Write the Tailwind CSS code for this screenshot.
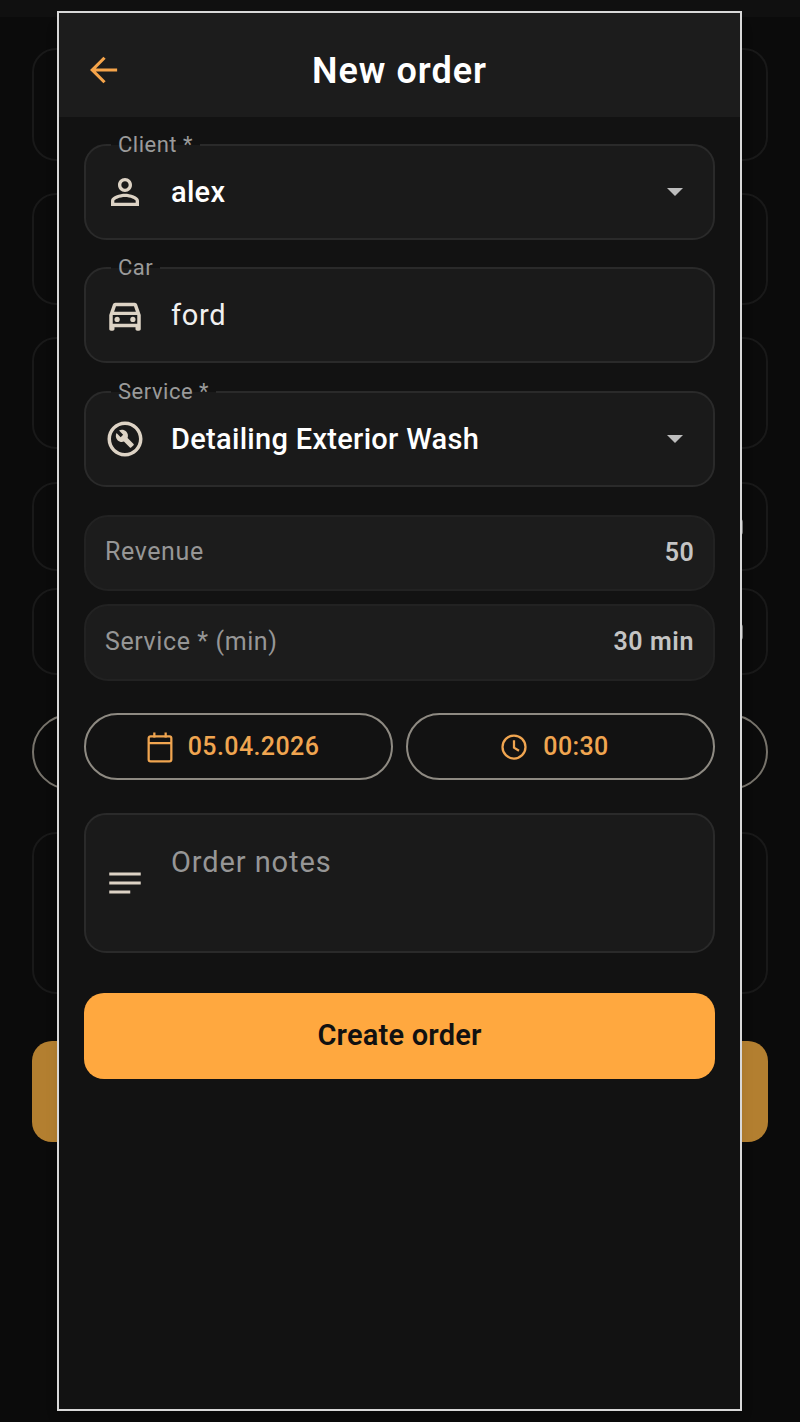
<!DOCTYPE html>
<html lang="en">
<head>
    <meta charset="UTF-8">
    <meta name="viewport" content="width=device-width, initial-scale=1.0">
    <title>New order</title>
    <script src="https://cdn.jsdelivr.net/npm/@tailwindcss/browser@4"></script>
</head>
<body class="relative w-[800px] h-[1422px] overflow-hidden bg-[#0b0b0b] font-['Roboto',sans-serif]">

    <!-- Page behind the dialog -->
    <div class="h-[17px] bg-[#101010]"></div>
    <div class="flex flex-col px-[32px]">
        <div class="mt-[31px] h-[113px] rounded-[24px] border-2 border-[#191919]"></div>
        <div class="mt-[32px] h-[112px] rounded-[24px] border-2 border-[#191919]"></div>
        <div class="mt-[32px] h-[112px] rounded-[24px] border-2 border-[#191919]"></div>
        <div class="mt-[33px] h-[89px] rounded-[24px] border-2 border-[#191919] flex items-center justify-end pr-[23px]">
            <div class="w-[6px] h-[16px] rounded-sm bg-[#777777]"></div>
        </div>
        <div class="mt-[17px] h-[87px] rounded-[24px] border-2 border-[#191919] flex items-center justify-between px-[23px]">
            <div class="w-[3px] h-[6px] bg-[#555555]"></div>
            <div class="w-[6px] h-[16px] rounded-sm bg-[#777777]"></div>
        </div>
        <div class="mt-[39px] h-[76px] rounded-full border-2 border-[#77736b]"></div>
        <div class="mt-[42px] h-[162px] rounded-[24px] border-2 border-[#191919]"></div>
        <div class="mt-[47px] h-[101px] rounded-[20px] bg-[#b37f30]"></div>
    </div>

    <!-- Dialog -->
    <div class="absolute left-[57px] top-[11px] w-[685px] h-[1400px] border-2 border-[#d8d8d8] bg-[#121212] flex flex-col shadow-lg">
        <header class="relative h-[104px] shrink-0 bg-[#1c1c1c] flex items-center justify-center">
            <button class="absolute left-[24px] top-[36px] text-[#f5a44a]">
                <svg class="w-[42px] h-[42px]" viewBox="0 0 24 24" fill="none" stroke="currentColor" stroke-width="1.8">
                    <path d="M19.5 12H5.5M12.3 5l-7 7 7 7"/>
                </svg>
            </button>
            <h1 class="text-[36px] leading-none font-semibold tracking-[1px] text-white mt-[12px]">New order</h1>
        </header>

        <div class="flex flex-col px-[25px] pt-[27px]">
            <!-- Client -->
            <div class="relative h-[96px] rounded-[22px] border-2 border-[#2a2a2a] bg-[#1a1a1a] flex items-center pl-[18px] pr-[30px]">
                <span class="absolute left-[25px] -top-[13px] px-[7px] h-[24px] leading-[24px] text-[22px] tracking-[0.5px] text-[#9a9a9a] bg-[linear-gradient(#121212_50%,#1a1a1a_50%)]">Client *</span>
                <svg class="w-[42px] h-[42px] shrink-0 text-[#ddd3c5]" viewBox="0 0 24 24" fill="currentColor">
                    <path d="M12 5.9c1.16 0 2.1.94 2.1 2.1s-.94 2.1-2.1 2.1S9.9 9.16 9.9 8s.94-2.1 2.1-2.1m0 9c2.97 0 6.1 1.46 6.1 2.1v1.1H5.9V17c0-.64 3.13-2.1 6.1-2.1M12 4C9.79 4 8 5.79 8 8s1.79 4 4 4 4-1.79 4-4-1.79-4-4-4zm0 9c-2.67 0-8 1.34-8 4v3h16v-3c0-2.66-5.33-4-8-4z"/>
                </svg>
                <span class="ml-[25px] flex-1 mt-[2px] text-[29px] font-medium tracking-[0.3px] text-white">alex</span>
                <div class="w-0 h-0 border-x-[8px] border-x-transparent border-t-[8px] border-t-[#bdbdbd]"></div>
            </div>

            <!-- Car -->
            <div class="relative mt-[27px] h-[96px] rounded-[22px] border-2 border-[#2a2a2a] bg-[#1a1a1a] flex items-center pl-[18px] pr-[30px]">
                <span class="absolute left-[25px] -top-[13px] px-[7px] h-[24px] leading-[24px] text-[22px] tracking-[0.5px] text-[#9a9a9a] bg-[linear-gradient(#121212_50%,#1a1a1a_50%)]">Car</span>
                <svg class="w-[42px] h-[42px] shrink-0 text-[#ddd3c5]" viewBox="0 0 24 24" fill="currentColor">
                    <path d="M18.92 6.01C18.72 5.42 18.16 5 17.5 5h-11c-.66 0-1.21.42-1.42 1.01L3 12v8c0 .55.45 1 1 1h1c.55 0 1-.45 1-1v-1h12v1c0 .55.45 1 1 1h1c.55 0 1-.45 1-1v-8l-2.08-5.99zM6.85 7h10.29l1.08 3.11H5.77L6.85 7zM19 17H5v-5h14v5z"/>
                    <circle cx="7.5" cy="14.5" r="1.5"/>
                    <circle cx="16.5" cy="14.5" r="1.5"/>
                </svg>
                <span class="ml-[25px] flex-1 mt-[2px] text-[29px] tracking-[0.7px] text-[#f0f0f0]">ford</span>
            </div>

            <!-- Service -->
            <div class="relative mt-[28px] h-[96px] rounded-[22px] border-2 border-[#2a2a2a] bg-[#1a1a1a] flex items-center pl-[18px] pr-[30px]">
                <span class="absolute left-[25px] -top-[13px] px-[7px] h-[24px] leading-[24px] text-[22px] tracking-[0.5px] text-[#9a9a9a] bg-[linear-gradient(#121212_50%,#1a1a1a_50%)]">Service *</span>
                <svg class="w-[42px] h-[42px] shrink-0 text-[#ddd3c5]" viewBox="0 0 24 24" fill="currentColor">
                    <path d="M12 2C6.48 2 2 6.48 2 12c0 5.52 4.48 10 10 10s10-4.48 10-10C22 6.48 17.52 2 12 2zM12 20c-4.41 0-8-3.59-8-8 0-4.41 3.59-8 8-8s8 3.59 8 8C20 16.41 16.41 20 12 20z"/>
                    <path d="M13.49 11.38c.43-1.22.17-2.64-.81-3.62-1.11-1.11-2.79-1.3-4.1-.59l2.35 2.35-1.41 1.41L7.17 8.58c-.71 1.32-.52 2.99.59 4.1.98.98 2.4 1.24 3.62.81l3.41 3.41c.2.2.51.2.71 0l1.4-1.4c.2-.2.2-.51 0-.71L13.49 11.38z"/>
                </svg>
                <span class="ml-[25px] flex-1 mt-[2px] text-[29px] font-medium tracking-[0.3px] text-white">Detailing Exterior Wash</span>
                <div class="w-0 h-0 border-x-[8px] border-x-transparent border-t-[8px] border-t-[#bdbdbd]"></div>
            </div>

            <!-- Revenue / duration -->
            <div class="mt-[28px] h-[76px] rounded-[24px] border-2 border-[#222222] bg-[#1c1c1c] flex items-center justify-between px-[19px]">
                <span class="text-[25px] tracking-[0.6px] text-[#969696] -mt-[2px]">Revenue</span>
                <span class="text-[25px] font-semibold tracking-[0.3px] text-[#c4c4c4] -mt-[1px]">50</span>
            </div>
            <div class="mt-[13px] h-[77px] rounded-[24px] border-2 border-[#222222] bg-[#1c1c1c] flex items-center justify-between px-[19px]">
                <span class="text-[25px] tracking-[0.6px] text-[#969696] -mt-[2px]">Service * (min)</span>
                <span class="text-[25px] font-semibold tracking-[0.6px] text-[#c4c4c4] -mt-[1px]">30 min</span>
            </div>

            <!-- Date and time -->
            <div class="mt-[32px] grid grid-cols-2 gap-[13px]">
                <div class="h-[67px] rounded-full border-2 border-[#8e8a82] flex items-center justify-center gap-[14px] pr-[12px]">
                    <svg class="w-[28px] h-[34px] text-[#f0a550]" viewBox="0 0 22 27" fill="none" stroke="currentColor" stroke-width="1.8" stroke-linejoin="round">
                        <rect x="2" y="5" width="18" height="20" rx="1.5"/>
                        <path d="M2 10.5h18M6.5 2v4M15.5 2v4"/>
                    </svg>
                    <span class="text-[25px] font-medium tracking-[0.4px] text-[#f0a550]">05.04.2026</span>
                </div>
                <div class="h-[67px] rounded-full border-2 border-[#8e8a82] flex items-center justify-center gap-[14px] pr-[13px]">
                    <svg class="w-[30px] h-[30px] text-[#f0a550]" viewBox="0 0 24 24" fill="none" stroke="currentColor" stroke-width="1.8">
                        <circle cx="12" cy="12" r="9.2"/>
                        <path d="M12 6.5V12.5l4 2.5"/>
                    </svg>
                    <span class="text-[25px] font-medium tracking-[0.4px] text-[#f0a550]">00:30</span>
                </div>
            </div>

            <!-- Notes -->
            <div class="mt-[33px] h-[140px] rounded-[22px] border-2 border-[#2a2a2a] bg-[#1a1a1a] flex items-center pl-[18px] pr-[27px]">
                <svg class="w-[42px] h-[42px] shrink-0 text-[#ddd3c5]" viewBox="0 0 24 24" fill="currentColor">
                    <path d="M3 18h12v-1.7H3V18zM3 6v1.7h18V6H3zm0 6.85h18v-1.7H3v1.7z"/>
                </svg>
                <span class="ml-[25px] self-start mt-[29px] text-[29px] leading-[36px] tracking-[0.9px] text-[#969696]">Order notes</span>
            </div>

            <!-- Submit -->
            <button class="mt-[40px] h-[86px] rounded-[20px] bg-[#ffa83f] text-[29px] font-semibold tracking-[0.2px] text-[#111111]">Create order</button>
        </div>
    </div>
</body>
</html>
